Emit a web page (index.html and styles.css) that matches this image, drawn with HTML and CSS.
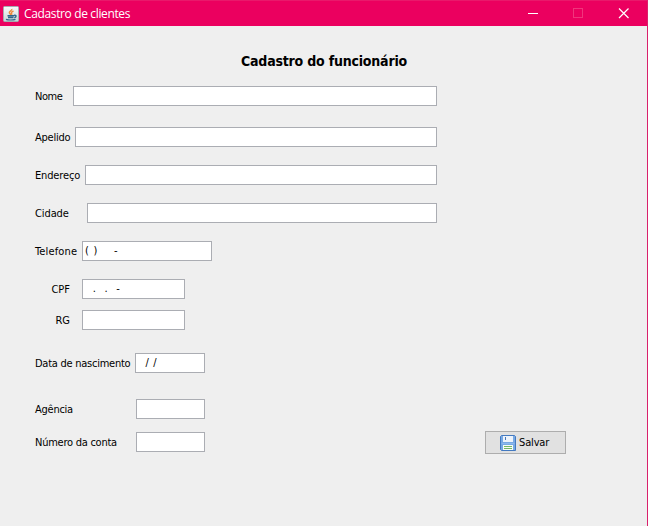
FILE: index.html
```html
<!DOCTYPE html>
<html lang="pt-BR">
<head>
<meta charset="utf-8">
<title>Cadastro de clientes</title>
<link rel="stylesheet" href="styles.css">
</head>
<body>
<div class="window">
  <header class="titlebar">
    <svg class="java" width="16" height="16" viewBox="0 0 16 16">
      <defs><linearGradient id="tile" x1="0" y1="0" x2="0" y2="1"><stop offset="0" stop-color="#fafafa"/><stop offset="1" stop-color="#c9d2d5"/></linearGradient></defs>
      <rect x=".5" y=".5" width="15" height="15" rx="1" fill="url(#tile)" stroke="#a5acb0"/>
      <path d="M8.800 3C9.300 4.600 6 5 6.300 6.700L8 9M10.500 5C8.300 6 8 6.500 9 8.700" fill="none" stroke="#ee8a3c" stroke-width="1.400"/>
      <path d="M4.500 9.700h6.500M5 11.500h5.500M3 13.300c2 .8 7 .8 9.500 0M11 9.400c2.700-.8 2.700 1.700.3 2.300" fill="none" stroke="#2f658b" stroke-width="1.400"/>
    </svg>
    <span class="caption">Cadastro de clientes</span>
    <svg class="controls" width="102" height="12" viewBox="0 0 102 12" fill="none">
      <path d="M0 6.500h10" stroke="#fff"/>
      <rect x="45.500" y="1.500" width="9" height="9" stroke="#f0357c"/>
      <path d="M91 1.500l9.500 9.500M100.500 1.500l-9.500 9.500" stroke="#fff" stroke-width="1.200"/>
    </svg>
  </header>
  <main class="content">
    <h1 class="heading"><span>Cadastro do funcionário</span></h1>
    <form class="form">
      <div class="row nome"><label>Nome</label><div class="field"></div></div>
      <div class="row apelido"><label>Apelido</label><div class="field"></div></div>
      <div class="row endereco"><label>Endereço</label><div class="field"></div></div>
      <div class="row cidade"><label>Cidade</label><div class="field"></div></div>
      <div class="row telefone"><label>Telefone</label><div class="field">( )&nbsp;&nbsp;&nbsp; -</div></div>
      <div class="row cpf"><label>CPF</label><div class="field">&nbsp; .&nbsp; .&nbsp; -</div></div>
      <div class="row rg"><label>RG</label><div class="field"></div></div>
      <div class="row data"><label>Data de nascimento</label><div class="field">&nbsp; / /</div></div>
      <div class="row agencia"><label>Agência</label><div class="field"></div></div>
      <div class="row conta"><label>Número da conta</label><div class="field"></div>
        <button class="save" type="button">
          <svg width="16" height="16" viewBox="0 0 16 16">
            <path d="M1.500.5h13l1 1v14h-14l-1-1v-13z" fill="#78a9e4" stroke="#4379c0"/>
            <path d="M3 1h10v6H3z" fill="#edf3fb"/>
            <path d="M5 2h1v3H5z" fill="#4877b5"/>
            <path d="M1.500 8.500h13" stroke="#8db9ec"/>
            <path d="M3 10h10v5H3z" fill="#f8fcf5"/>
            <path d="M4 11.500h8M4 13.500h8" stroke="#75b767"/>
          </svg>
          <span>Salvar</span>
        </button>
      </div>
    </form>
  </main>
</div>
</body>
</html>
```

FILE: styles.css
```css
* { box-sizing: border-box; }
body {
  margin: 0;
  font-family: "DejaVu Sans Condensed", "DejaVu Sans", sans-serif;
  font-stretch: condensed;
  font-size: 11px;
  color: #000;
}
.window {
  height: 526px;
  overflow: hidden;
  background: #efefef;
  border-right: 1px solid #d9206b;
}
.titlebar {
  display: flex;
  align-items: center;
  height: 26px;
  padding: 0 17px 0 3px;
  background: #eb005f;
  border-top: 1px solid #e9196b;
  color: #fff;
}
.controls { margin-top: -1px; }
.caption {
  flex: 1;
  margin-left: 5px;
  font: 12px/18px "Open Sans", sans-serif;
  letter-spacing: -0.36px;
}
.heading {
  height: 60px;
  margin: 0;
  padding: 25px 0 0 241px;
  font-size: 14px;
  line-height: 20px;
  letter-spacing: -0.2px;
  white-space: nowrap;
}
.row {
  display: flex;
  width: 531px;
  height: 20px;
  margin: 0 0 18px 35px;
}
.row label {
  flex: none;
  width: 47px;
  line-height: 22px;
  white-space: nowrap;
  letter-spacing: -0.25px;
}
.field {
  width: 103px;
  height: 20px;
  padding-left: 2px;
  background: #fff;
  border: 1px solid #abadb3;
  line-height: 18px;
  white-space: nowrap;
}
.nome { margin-bottom: 21px; }
.nome label { width: 38px; letter-spacing: -0.45px; }
.nome .field { width: 364px; }
.apelido label { width: 40px; }
.apelido .field { width: 362px; }
.endereco label { width: 50px; letter-spacing: -0.15px; }
.endereco .field { width: 352px; }
.cidade label { width: 52px; letter-spacing: -0.1px; }
.cidade .field { width: 350px; }
.telefone label { letter-spacing: 0.15px; }
.telefone .field { width: 130px; letter-spacing: 0.8px; }
.cpf { margin-bottom: 11px; }
.cpf .field { letter-spacing: 0.75px; }
.cpf label, .rg label { padding-right: 12px; text-align: right; letter-spacing: 0; }
.rg { margin-bottom: 23px; }
.data { margin-bottom: 26px; }
.data label { width: 100px; }
.data .field { width: 70px; letter-spacing: 0.6px; }
.agencia { margin-bottom: 13px; }
.agencia label, .conta label { width: 101px; }
.agencia .field, .conta .field { width: 69px; }
.save {
  display: flex;
  align-items: center;
  gap: 3px;
  width: 81px;
  height: 23px;
  margin: -1px 0 0 auto;
  padding: 0 0 0 14px;
  background: #e1e1e1;
  border: 1px solid #adadad;
  color: #000;
  font: inherit;
  letter-spacing: -0.15px;
}
```
